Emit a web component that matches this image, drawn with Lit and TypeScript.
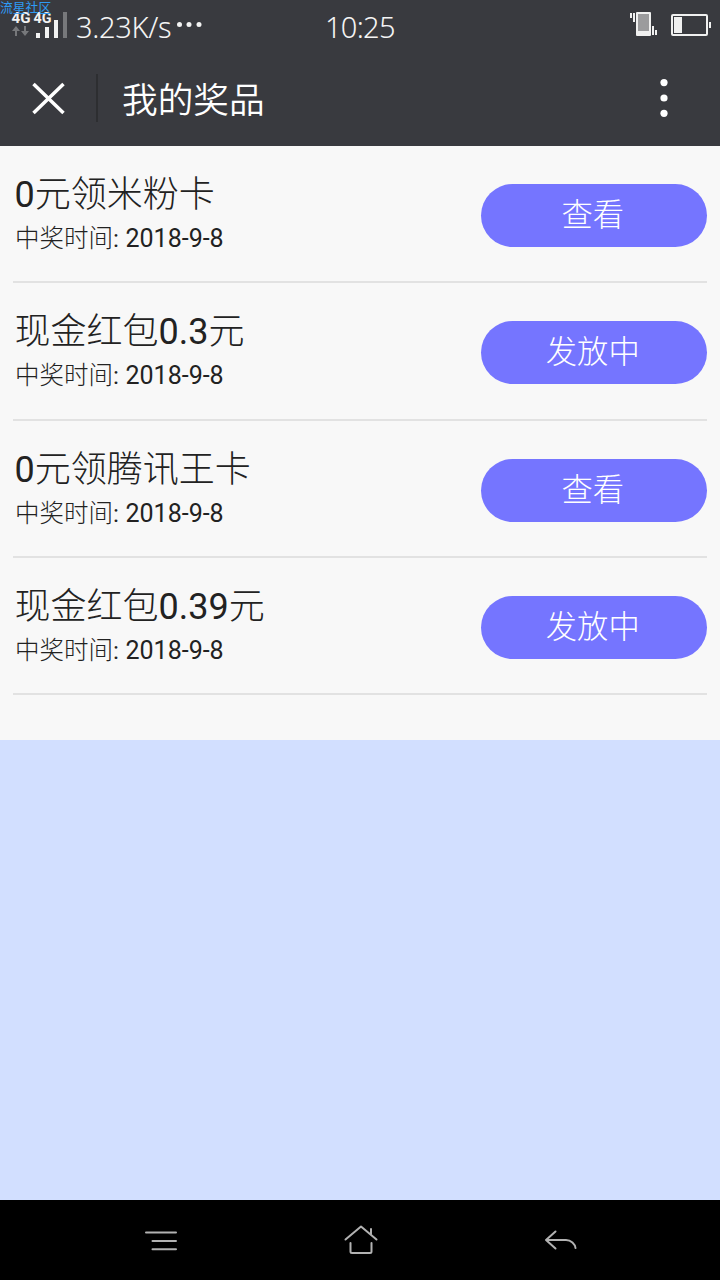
import { LitElement, html, css } from "lit";
import { customElement, property } from "lit/decorators.js";

@customElement("status-bar")
class StatusBar extends LitElement {
  static styles = css`
    :host { display: block; height: 50px; position: relative; color: #f4f4f4; }
    .bar { display: grid; grid-template-columns: 76px 249px 1fr 100px; height: 50px; }
    svg { display: block; }
    .speed, .time { font: 300 29px/54px "Noto Sans", "Noto Sans CJK SC", sans-serif; white-space: nowrap; }
    .speed { display: flex; letter-spacing: -0.3px; }
    .dots { margin-left: 5px; }
    .time { letter-spacing: -0.7px; }
    .mark { position: absolute; left: 0; top: 0; font: 400 12.800px/13px "Noto Sans CJK SC", sans-serif; color: #2e9bf5; white-space: nowrap; }
    .net { font: 700 15px Roboto, sans-serif; }
  `;
  render() {
    return html`
      <div class="bar">
        <svg width="76" height="50" fill="#f2f2f2">
          <text class="net" x="11.500" y="23" textLength="19" lengthAdjust="spacingAndGlyphs">4G</text>
          <text class="net" x="33.500" y="22.500" textLength="18" lengthAdjust="spacingAndGlyphs">4G</text>
          <path d="M12 31l4-5 4 5h-3v5h-2v-5zM21 31h3v-5h2v5h3l-4 5z" fill="#77787b" />
          <path d="M36 33h4v5h-4zM45 27h4v11h-4zM54 20h4v18h-4z" />
          <path d="M63 12h4v26h-4z" fill="#77787b" />
        </svg>
        <div class="speed"><span>3.23K/s</span>
          <svg class="dots" width="28" height="50" fill="#f2f2f2"><circle cx="3.500" cy="24.500" r="2.500" /><circle cx="13" cy="24.500" r="2.500" /><circle cx="23" cy="24.500" r="2.500" /></svg>
        </div>
        <div class="time">10:25</div>
        <svg width="100" height="50" fill="#f0f0f0">
          <path d="M10 13h2v5h-2zM13 13h2v9h-2zM32 26h2v9h-2zM35 30h2v5h-2z" />
          <rect x="16" y="12" width="15" height="24" rx="1" />
          <rect x="18" y="14" width="11" height="17" fill="#9b9b9d" />
          <rect x="52" y="15" width="35" height="20" rx="1" fill="none" stroke="#f0f0f0" stroke-width="2" />
          <path d="M54 17h8v16h-8zM89 22h2v6h-2z" />
        </svg>
      </div>
      <div class="mark">流星社区</div>`;
  }
}

@customElement("title-bar")
class TitleBar extends LitElement {
  static styles = css`
    :host { display: flex; height: 96px; color: #fff; }
    svg { display: block; flex: none; }
    .title { flex: 1; padding-left: 24px; font: 350 35.7px/95px "Noto Sans CJK SC", sans-serif; }
  `;
  render() {
    return html`
      <svg width="98" height="96"><path d="M33.500 34l30 29M63.500 34l-30 29" stroke="#fff" stroke-width="3.500" /><path d="M97 24v48" stroke="#2d2e31" stroke-width="2" /></svg>
      <div class="title">我的奖品</div>
      <svg width="90" height="96" fill="#fff"><circle cx="34" cy="32.600" r="3.600" /><circle cx="34" cy="48" r="3.600" /><circle cx="34" cy="63.300" r="3.600" /></svg>`;
  }
}

@customElement("prize-row")
class PrizeRow extends LitElement {
  @property() name = "";
  @property() date = "";
  @property() action = "";
  static styles = css`
    :host { display: flex; justify-content: space-between; box-sizing: border-box; height: 137.33px; margin: 0 13.500px 0 13px; border-bottom: 2px solid #e2e2e2; color: #222; font-family: Roboto, "Noto Sans CJK SC", sans-serif; font-weight: 300; }
    .info { padding: 26px 0 0 1.500px; white-space: nowrap; }
    .name { font-size: 36px; line-height: 46px; }
    .sub { padding-left: 0.500px; font-size: 24.500px; line-height: 42px; }
    .latin { font-weight: 385; }
    .sub .date { font-size: 25px; margin-left: 0.500px; }
    .btn { flex: none; width: 225.500px; height: 63px; margin-top: 38px; border: 0; padding: 0 2px 5px 0; border-radius: 32px; background: #7575ff; color: #fff; font: 300 31.300px/58px "Noto Sans CJK SC", sans-serif; }
  `;
  render() {
    const parts = this.name.split(/([\d.]+)/).filter(Boolean);
    return html`
      <div class="info">
        <div class="name">${parts.map((p) => /^\d/.test(p) ? html`<span class="latin">${p}</span>` : p)}</div>
        <div class="sub">中奖时间<span class="latin">: </span><span class="latin date">${this.date}</span></div>
      </div>
      <button class="btn">${this.action}</button>`;
  }
}

@customElement("nav-bar")
class NavBar extends LitElement {
  static styles = css`
    :host { display: flex; justify-content: center; gap: 160px; height: 80px; background: #000; }
    svg { display: block; fill: none; stroke: #b2b2b2; stroke-width: 2; stroke-linecap: round; stroke-linejoin: round; }
  `;
  render() {
    return html`
      <svg width="40" height="80"><path d="M6 32.500h30M12.500 41h23.500M12.500 49.300h23.500" /></svg>
      <svg width="40" height="80"><path d="M5.500 39.500l15.500-13 15.500 13M31 34v-5M10.500 43v8.500q0 1.500 1.500 1.500h18q1.500 0 1.500-1.500V43" /></svg>
      <svg width="40" height="80"><path d="M15.500 31.500L6 40l9.500 8.500M6 40h20c5 0 9 4 9.500 8" /></svg>`;
  }
}

@customElement("app-root")
class AppRoot extends LitElement {
  static styles = css`
    :host { display: flex; flex-direction: column; width: 720px; height: 1280px; overflow: hidden; background: #d2dfff; }
    .top { height: 146px; background: #393a3f; }
    .list { height: 594px; background: #f8f8f8; }
    .fill { flex: 1; }
  `;
  private prizes = [
    { name: "0元领米粉卡", action: "查看" },
    { name: "现金红包0.3元", action: "发放中" },
    { name: "0元领腾讯王卡", action: "查看" },
    { name: "现金红包0.39元", action: "发放中" },
  ];
  render() {
    return html`
      <header class="top"><status-bar></status-bar><title-bar></title-bar></header>
      <main class="list">${this.prizes.map((p) => html`<prize-row .name=${p.name} date="2018-9-8" .action=${p.action}></prize-row>`)}</main>
      <div class="fill"></div>
      <nav-bar></nav-bar>`;
  }
}
